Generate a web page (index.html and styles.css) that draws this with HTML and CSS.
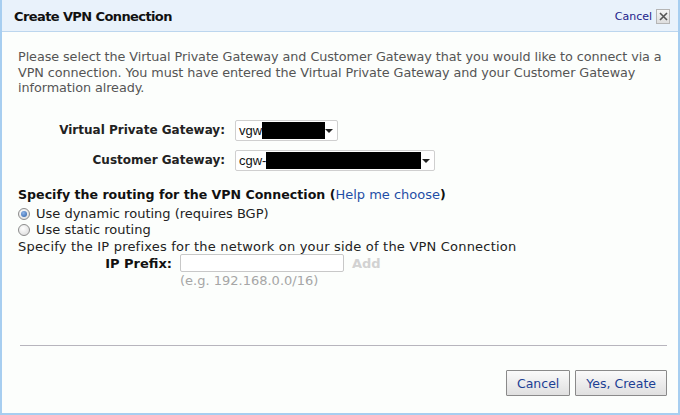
FILE: index.html
```html
<!DOCTYPE html>
<html>
<head>
<meta charset="utf-8">
<link rel="stylesheet" href="styles.css">
</head>
<body>
<div class="dialog">
  <div class="titlebar">
    <h1 class="title">Create VPN Connection</h1>
    <div class="title-actions">
      <a class="title-cancel">Cancel</a>
      <span class="close-box">
        <svg width="9" height="9" viewBox="0 0 9 9"><path d="M1 1 L8 8 M8 1 L1 8" stroke="#555" stroke-width="1.6"/></svg>
      </span>
    </div>
  </div>
  <div class="content">
    <p class="intro">Please select the Virtual Private Gateway and Customer Gateway that you would like to connect via a VPN connection. You must have entered the Virtual Private Gateway and your Customer Gateway information already.</p>

    <div class="gw-grid">
      <div class="gw-label">Virtual Private Gateway:</div>
      <div class="dropdown dd-vgw">
        <span class="dd-text">vgw</span><span class="redact r-vgw"></span>
        <span class="caret"></span>
      </div>
      <div class="gw-label">Customer Gateway:</div>
      <div class="dropdown dd-cgw">
        <span class="dd-text">cgw-</span><span class="redact r-cgw"></span>
        <span class="caret"></span>
      </div>
    </div>

    <div class="routing">
      <div class="routing-head"><b>Specify the routing for the VPN Connection (</b><a class="help">Help me choose</a><b>)</b></div>
      <div class="radio-row first"><span class="radio checked"></span><span>Use dynamic routing (requires BGP)</span></div>
      <div class="radio-row"><span class="radio"></span><span>Use static routing</span></div>
      <div class="prefix-text">Specify the IP prefixes for the network on your side of the VPN Connection</div>
      <div class="prefix-grid">
        <div class="prefix-label">IP Prefix:</div>
        <div class="prefix-field"><span class="prefix-input"></span><span class="add">Add</span></div>
        <div></div>
        <div class="hint">(e.g. 192.168.0.0/16)</div>
      </div>
    </div>

    <div class="spacer"></div>
    <hr class="divider">
    <div class="actions">
      <button class="btn">Cancel</button>
      <button class="btn">Yes, Create</button>
    </div>
  </div>
</div>
</body>
</html>
```

FILE: styles.css
```css
* { box-sizing: border-box; }
html, body { margin: 0; padding: 0; background: #fdfefd; }
body { width: 680px; height: 415px; overflow: hidden; font-family: "DejaVu Sans", Verdana, sans-serif; font-size: 13px; color: #222; }

.dialog {
  width: 680px; height: 415px;
  display: flex; flex-direction: column;
  border-left: 2px solid #a7cef0;
  border-right: 2px solid #a7cef0;
  border-bottom: 2px solid #a7cef0;
  background: #fcfefc;
}

.titlebar {
  height: 32px;
  flex: none;
  display: flex; align-items: center; justify-content: space-between;
  padding: 0 8px 0 12px;
  background-color: #e9f2fb;
  background-image: radial-gradient(#dde8f4 0.6px, transparent 0.7px);
  background-size: 4px 4px;
  border-bottom: 1px solid #bcd6ee;
}
.title {
  margin: 0;
  font-family: "DejaVu Sans", sans-serif;
  font-weight: bold; font-size: 13px; letter-spacing: -0.6px; color: #111;
  padding-top: 2px;
}
.title-actions { display: flex; align-items: center; gap: 4px; padding-top: 2px; }
.title-cancel { font-size: 11px; color: #22228a; font-family: "DejaVu Sans", sans-serif; }
.close-box {
  width: 14px; height: 15px;
  display: flex; align-items: center; justify-content: center;
  border: 1px solid #b5b5b5; background: linear-gradient(#f6f6f6, #dedede);
}

.content { flex: 1; display: flex; flex-direction: column; padding: 17px 11px 17px 16px; }

.intro { margin: 0 -4px 0 0; color: #555; line-height: 15.5px; font-size: 12.8px; letter-spacing: -0.08px; }

.gw-grid {
  display: grid; grid-template-columns: 207px auto; column-gap: 10px; row-gap: 9px;
  align-items: center; justify-items: start;
  margin-top: 24px;
  font-size: 12px;
}
.gw-label { justify-self: end; font-weight: bold; color: #222; }
.dropdown {
  height: 21px; display: flex; align-items: center;
  border: 1px solid #cfcfcf; border-radius: 2px; background: #fff;
  padding-left: 3px; position: relative;
  font-family: "Liberation Sans", Arial, sans-serif; font-size: 13px; color: #111;
}
.dd-vgw { width: 103px; }
.dd-cgw { width: 200px; }
.redact { display: inline-block; height: 17px; background: #000; }
.r-vgw { width: 63px; }
.r-cgw { width: 155px; }
.caret {
  position: absolute; right: 4px; top: 8px;
  width: 0; height: 0;
  border-left: 4px solid transparent; border-right: 4px solid transparent; border-top: 4px solid #222;
}

.routing { margin-top: 15px; }
.routing-head { line-height: 18px; }
.routing-head b { color: #111; font-size: 12.6px; }
.help { color: #1f4ea6; }
.radio-row { display: flex; align-items: center; gap: 6px; line-height: 16px; }
.radio-row.first { margin-top: 2px; }
.radio {
  width: 12px; height: 12px; border-radius: 50%;
  border: 1px solid #8c8c8c;
  background: radial-gradient(circle at 40% 35%, #fff, #d7d7d7);
  position: relative; flex: none;
}
.radio.checked::after {
  content: ""; position: absolute; left: 2px; top: 2px; width: 6px; height: 6px; border-radius: 50%;
  background: radial-gradient(circle at 40% 35%, #8fb6ea, #2a5ea6);
}
.prefix-text { line-height: 17px; letter-spacing: 0.2px; }
.prefix-grid {
  display: grid; grid-template-columns: 154px auto; column-gap: 8px; align-items: center;
}
.prefix-label { justify-self: end; font-weight: bold; color: #111; }
.prefix-field { display: flex; align-items: center; gap: 8px; height: 17px; }
.prefix-input { width: 164px; height: 18px; border: 1px solid #c8c8c8; border-radius: 2px; background: #fff; }
.add { font-weight: bold; color: #d2d2d2; }
.hint { color: #a6a6a6; line-height: 17px; }

.spacer { flex: 1; }
.divider { margin: 0 0 24px 2px; border: 0; border-top: 1px solid #b7b5bd; height: 0; }
.actions { display: flex; justify-content: flex-end; gap: 5px; }
.btn {
  height: 26px; padding: 0 10px;
  font-family: "DejaVu Sans", Verdana, sans-serif; font-size: 12.5px; color: #1c3f94;
  border: 1px solid #8a8a8a; border-radius: 1px;
  background: linear-gradient(#fafafa, #e0e0e0);
}
```
